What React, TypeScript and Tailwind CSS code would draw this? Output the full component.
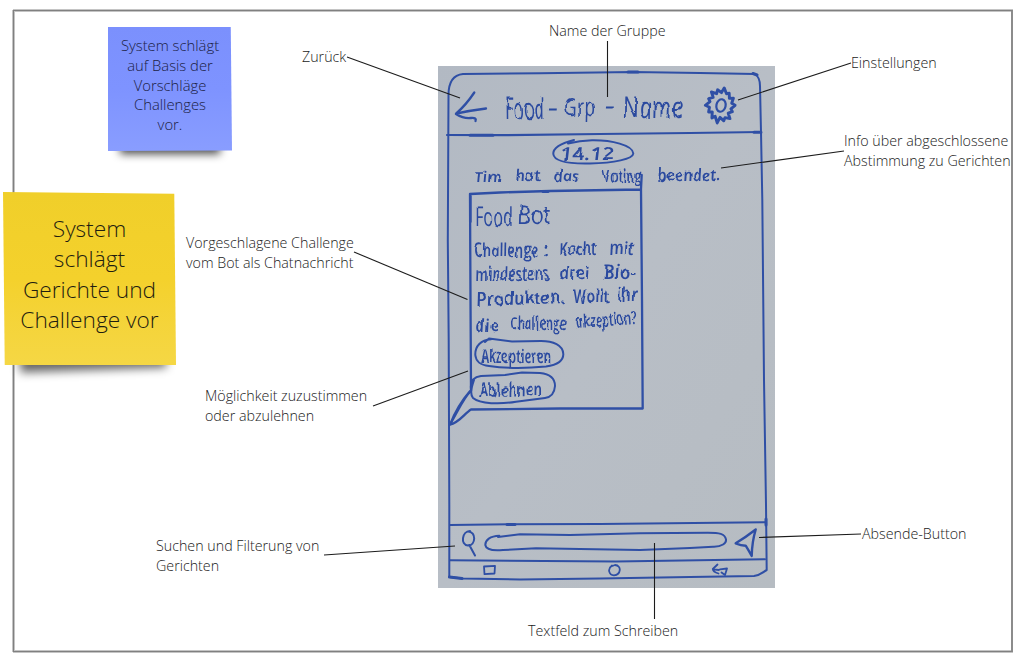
import React from "react";

type Word = { t: string; x: number; y: number; w: number; s: number; r?: number; b?: number };

const words: Word[] = [
  { t: "Food", x: 505, y: 118, w: 40, s: 30 },
  { t: "-", x: 548, y: 116, w: 9, s: 28 },
  { t: "Grp", x: 564, y: 115, w: 31, s: 25 },
  { t: "-", x: 605, y: 114, w: 9, s: 28 },
  { t: "Name", x: 623, y: 117, w: 60, s: 30 },
  { t: "14.12", x: 560, y: 159, w: 54, s: 18, b: 600 },
  { t: "Tim", x: 474, y: 181, w: 27, s: 15, b: 600 },
  { t: "hat", x: 515, y: 180, w: 25, s: 16, b: 600 },
  { t: "das", x: 553, y: 181, w: 26, s: 16, b: 600 },
  { t: "Voting", x: 602, y: 181, w: 39, s: 17, b: 600 },
  { t: "beendet.", x: 657, y: 180, w: 63, s: 17, b: 600 },
  { t: "Food", x: 475, y: 225, w: 38, s: 26 },
  { t: "Bot", x: 518, y: 223, w: 32, s: 26 },
  { t: "Challenge", x: 474, y: 256, w: 64, s: 19, b: 600 },
  { t: ":", x: 543, y: 255, w: 5, s: 18, b: 600 },
  { t: "Kocht", x: 559, y: 254, w: 37, s: 18, b: 600 },
  { t: "mit", x: 609, y: 253, w: 25, s: 17, b: 600 },
  { t: "mindestens", x: 475, y: 279, w: 74, s: 18, b: 600 },
  { t: "drei", x: 559, y: 278, w: 30, s: 18, b: 600 },
  { t: "Bio-", x: 603, y: 278, w: 33, s: 19, b: 600 },
  { t: "Produkten.", x: 476, y: 305, w: 89, s: 18, r: -2, b: 600 },
  { t: "Wollt", x: 573, y: 302, w: 36, s: 19, b: 600 },
  { t: "ihr", x: 617, y: 300, w: 20, s: 19, b: 600 },
  { t: "die", x: 475, y: 331, w: 23, s: 18, b: 600 },
  { t: "Challenge", x: 510, y: 329, w: 56, s: 19, b: 600 },
  { t: "akzeption?", x: 576, y: 327, w: 61, s: 18, r: -4, b: 600 },
  { t: "Akzeptieren", x: 481, y: 362, w: 70, s: 19, b: 600 },
  { t: "Ablehnen", x: 479, y: 396, w: 63, s: 19, r: -1, b: 600 },
];

const gearRadii = [15.5, 11.5, 14, 11, 16, 12.5, 15, 11.4, 17, 12, 15.2, 11, 14.5, 12.2, 16.6, 12, 14.4, 11, 16, 11.8, 15, 12, 16.8, 12.5, 14.6, 11.4, 15.2, 12];

const gearPoints = gearRadii
  .map((k, i) => {
    const a = (i / gearRadii.length) * Math.PI * 2 + (i % 2 ? 0.07 : 0);
    return `${(720.7 + Math.cos(a) * k * 0.93).toFixed(1)},${(105.3 + Math.sin(a) * k * 1.06).toFixed(1)}`;
  })
  .join(" ");

function PhoneSketch() {
  return (
    <svg viewBox="438 66 337 522" width="337" height="522" className="block">
      <defs>
        <linearGradient id="paper" x1="0" y1="0" x2="1" y2="1">
          <stop offset="0" stopColor="#b2b9c3" />
          <stop offset="0.5" stopColor="#b8bec6" />
          <stop offset="1" stopColor="#b6bcc2" />
        </linearGradient>
        <filter id="pen" x="-5%" y="-5%" width="110%" height="110%">
          <feTurbulence type="fractalNoise" baseFrequency="0.08" numOctaves="2" seed="9" />
          <feDisplacementMap in="SourceGraphic" scale="4" xChannelSelector="R" yChannelSelector="G" />
        </filter>
      </defs>
      <rect x="438" y="66" width="337" height="522" fill="url(#paper)" />
      <g fill="none" stroke="#2f4fa5" strokeWidth="2" strokeLinecap="round" strokeLinejoin="round">
        <path d="M449.3 577 L449.3 505 L448.7 340 L447.8 240 L448.5 95 C448.5 83 453 75 463 74 L540 73.3 L633 72 L700 73 L755 74 C758 76 760 80 760 86 L761 132 L762.3 200 L764 380 L766 505 L766.7 570 C763 572 761 575 754 576 L690 577 L600 578.5 L520 579.5 L463 578.5 L449.3 577" />
        <path d="M447 135 L500 135.2 L600 134 L690 133 L761 132" strokeWidth="2.2" />
        <path d="M470 135.3H493 M628 72H638 M753 73.5L757 75 M449.5 577L462 578.5 M507 524.5H515 M543 191.5H548 M754 132.3H761 M766 519V525" strokeWidth="3" />
        <path d="M450 525 L510 524.3 L600 524 L765 522.3 M450 560.3 L616 561.5 L765 559.3" />
        <path d="M474.3 92.5 Q466 105 456 113.7 Q470 110.5 486 108.5 M456 114 Q464 119 471 118 Q477 117.5 475.5 121" strokeWidth="2.3" />
        <path d="M574 140 C562 143 553 148 553.3 154 C554 161 568 164 590 163.5 C614 163 633 159 633.3 153.5 C633 145 611 140 592 140.3 C583 140.5 574 142 568 143.5" />
        <path d="M470 194 L500 192.5 L550 191 L641 189.5 M641.7 175 L641 189 L642 300 L642.7 408.5 L560 408.5 L471 409.5 C465 413 459 423 450 424.5 C458 411 464 397 471 391 L470.5 300 L470 194 M470.6 196V222" strokeWidth="2.3" />
        <path d="M450 424.5Q457 406 470 391" />
        <path d="M491 339.3 C481 340 475 346 475.3 355 C476 362 480 365 489 366 C510 369 530 368 546 366.5 C557 365 563.5 361 563.3 354 C563 345 553 341 541 341 L512 341.5 L489 338.5 L485 342" />
        <path d="M471 389 C470 381 474 377 481 376 L505 375 L522 372.5 L540 373 C550 374 555 378 555 386 C554.5 393 552 397 545 398 L516 401.7 C500 404.5 480 404 473 398 C470 394 471 389 474 380" />
        <path d="M499.3 535.7 C490 536 485.3 540 485.3 545 C486 549.5 492 551 503 550 L536 548.3 L580 549 L640 550 L690 548 L713 546.7 C722 547 726.5 543 726 539.5 C725 533.5 719 532.7 708 532.7 L640 533.3 L570 535 L520 534.3 L498 537" />
        <path d="M470 531 C462 531 460 545 468 545.5 C476 545.5 476.5 531.5 468 531.5 M469.3 545 L475 555.5" />
        <path d="M484 566.5 L495 565.8 L494.5 573.5 L484.5 574.2 Z M612 565.5 C607 569 609 575 614 575.3 C621 574.5 622 565.5 615 565 L611 566.5" strokeWidth="1.8" />
        <path d="M717.5 564.5 L712.8 569 Q713 572 718.5 573.5 M713 569.3 L719 570 M720 569.3 L727 568.5 L725 575 L721.5 572.5" strokeWidth="1.8" />
        <path d="M755.7 529.5 Q746 537 735.7 543.3 Q741 545.5 745.7 545.7 Q749 551 751.7 556 Q752 542 755.7 529.5" strokeWidth="2.4" />
        <polygon points={gearPoints} strokeWidth="2.9" />
        <ellipse cx="721" cy="105.5" rx="4.6" ry="6.3" transform="rotate(12 721 105.5)" strokeWidth="2.2" />
      </g>
      <g fill="#2b4a9f" filter="url(#pen)" fontFamily="'Open Sans', sans-serif" fontStyle="italic">
        {words.map((w, i) => (
          <text
            key={i}
            fontSize={w.s}
            fontWeight={w.b ?? 500}
            textLength={w.w}
            lengthAdjust="spacingAndGlyphs"
            transform={`translate(${w.x + 1} ${w.y + 1}) rotate(${w.r ?? 0}) skewX(8)`}
          >
            {w.t}
          </text>
        ))}
      </g>
    </svg>
  );
}

const connectors = [
  "M347 57L460 98",
  "M607.5 41V97",
  "M738 100L851 63",
  "M721 168L844 151",
  "M354 252L467.5 299.5",
  "M373 406L468 371",
  "M324 555L455 546",
  "M759 537.5L861 534",
  "M654.5 543V619",
];

function Label({ at, lines }: { at: string; lines: string[] }) {
  return (
    <div className={`absolute whitespace-nowrap text-[14.25px] font-light leading-[19.5px] text-[#1a1a1a] ${at}`}>
      {lines.map((l) => (
        <div key={l}>{l}</div>
      ))}
    </div>
  );
}

export default function App() {
  return (
    <main className="relative h-[667px] w-[1023px] overflow-hidden bg-white font-['Open_Sans',sans-serif]">
      <div className="absolute left-[13px] top-[10px] h-[642px] w-[1000px] border border-r-2 border-[#808080] border-r-[#8c8c8c] shadow-[-1px_0_0_#c4c4c4,0_-1px_0_#c4c4c4,0_1px_0_#c4c4c4,inset_1px_1px_0_#c4c4c4,inset_0_-1px_0_#c4c4c4]" />

      <div className="absolute left-[120px] top-[138px] h-[16px] w-[100px] bg-black/70 blur-[4px]" />
      <div className="absolute left-[108px] top-[27px] flex h-[124px] w-[124px] justify-center bg-linear-to-b from-[#7b90fd] via-[#7e93ff] to-[#899dff] pt-[9px] text-center text-[14.8px] font-[350] leading-[19.8px] text-[#1b2144] [clip-path:polygon(0_0,99%_0,100%_99.5%,0_100%)]">
        <p className="whitespace-nowrap">System schlägt<br />auf Basis der<br />Vorschläge<br />Challenges<br />vor.</p>
      </div>

      <div className="absolute left-[20px] top-[350px] h-[20px] w-[146px] rotate-[-2deg] bg-black/60 blur-[5px]" />
      <div className="absolute left-[3px] top-[192px] flex h-[173px] w-[173px] justify-center bg-linear-to-b from-[#f0cf2a] via-[#f4d12c] to-[#f5d744] pt-[22px] text-center text-[22.7px] font-[350] leading-[30.3px] text-[#1f1d10] [clip-path:polygon(0_0,99%_1%,100%_100%,1%_100%)]">
        <p className="whitespace-nowrap">System<br />schlägt<br />Gerichte und<br />Challenge vor</p>
      </div>

      <div className="absolute left-[438px] top-[66px]">
        <PhoneSketch />
      </div>

      <svg className="absolute inset-0" width="1023" height="667" fill="none" stroke="#1c1c1c" strokeWidth="1.1">
        {connectors.map((d) => (
          <path key={d} d={d} />
        ))}
      </svg>

      <Label at="left-[302px] top-[47px]" lines={["Zurück"]} />
      <Label at="left-[549px] top-[21px]" lines={["Name der Gruppe"]} />
      <Label at="left-[851px] top-[53px]" lines={["Einstellungen"]} />
      <Label at="left-[844px] top-[131px]" lines={["Info über abgeschlossene", "Abstimmung zu Gerichten"]} />
      <Label at="left-[186px] top-[233px]" lines={["Vorgeschlagene Challenge", "vom Bot als Chatnachricht"]} />
      <Label at="left-[205px] top-[386px]" lines={["Möglichkeit zuzustimmen", "oder abzulehnen"]} />
      <Label at="left-[156px] top-[536px]" lines={["Suchen und Filterung von", "Gerichten"]} />
      <Label at="left-[862px] top-[524px]" lines={["Absende-Button"]} />
      <Label at="left-[528px] top-[621px]" lines={["Textfeld zum Schreiben"]} />
    </main>
  );
}
